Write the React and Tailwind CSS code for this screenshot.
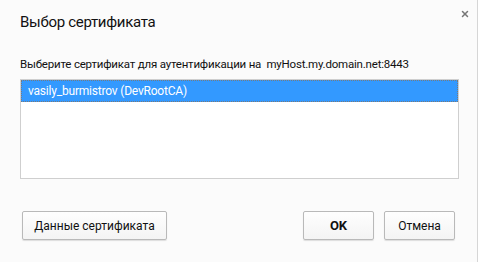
import { X } from "lucide-react";

const font = { fontFamily: 'Roboto, "Noto Sans", sans-serif' };

const Btn = ({ children, className = "" }) => (
  <button
    className={`h-[29px] border border-[#b9b9b9] bg-gradient-to-b from-[#fefefe] to-[#f4f4f4] rounded-[2px] shadow-[0_1px_1px_rgba(0,0,0,0.12)] text-[12px] text-[#111] ${className}`}
  >
    {children}
  </button>
);

export default function App() {
  return (
    <div className="w-[480px] h-[262px] bg-white flex" style={font}>
      <div className="w-[478px] h-full bg-[#fbfbfb] border-r border-[#d6d6d6] flex flex-col relative">
        {/* close */}
        <button className="absolute left-[460px] top-[9px] text-[#777]">
          <X size={10} strokeWidth={3.6} />
        </button>

        <h1 className="pl-5 pt-[11px] text-[15px] leading-[22px] tracking-[-0.3px] text-[#111]">Выбор сертификата</h1>

        <p className="pl-5 mt-[23px] text-[11.5px] leading-[16px] tracking-[-0.2px] text-[#111]">
          Выберите сертификат для аутентификации на&nbsp; myHost.my.domain.net:8443
        </p>

        <div className="ml-5 mt-[7px] w-[439px] h-[100px] border border-[#cfcfcf] bg-white">
          <div className="h-[22px] bg-[#3399ff] border border-dotted border-[#7a7a7a] flex items-center pl-[6px] text-white text-[12px] tracking-[-0.2px]">
            vasily_burmistrov (DevRootCA)
          </div>
        </div>

        <div className="flex items-center mt-[32px] pl-[22px] pr-[22px]">
          <Btn className="w-[145px]">Данные сертификата</Btn>
          <div className="flex-1" />
          <Btn className="w-[71px] font-bold text-[13px]">OK</Btn>
          <Btn className="w-[71px] ml-[10px]">Отмена</Btn>
        </div>
      </div>
    </div>
  );
}
